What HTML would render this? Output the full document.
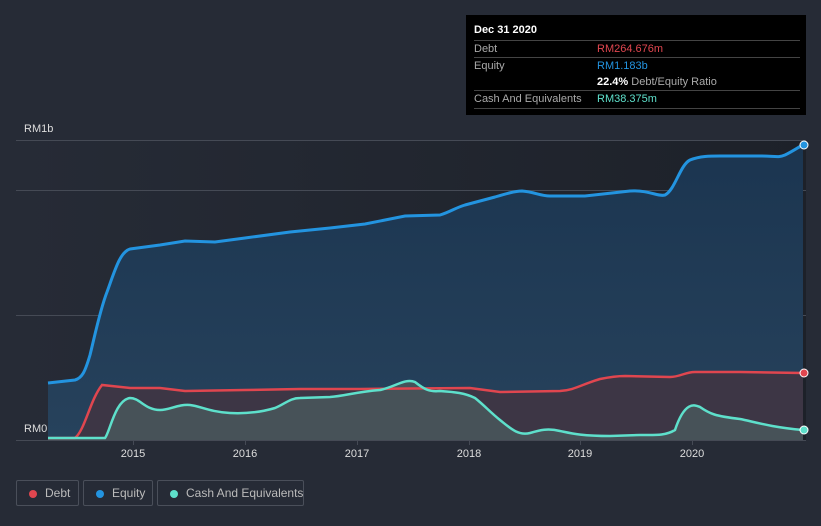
<!DOCTYPE html><html><head><style>
body{margin:0;width:821px;height:526px;background:#262b36;font-family:"Liberation Sans",sans-serif;overflow:hidden;position:relative}
.tt{position:absolute;left:466px;top:15px;width:340px;height:100px;background:#000;color:#fff;font-size:11px}
.r{position:absolute;left:8px;right:6px;border-top:1px solid #444;height:17px;line-height:17px;color:#aaa}
.r span{position:absolute;left:123px}
.leg{position:absolute;top:480px;height:26px;border:1px solid #4a4f5a;border-radius:2px;color:#bbb;font-size:12px;line-height:24px;box-sizing:border-box;white-space:nowrap}
.leg i{position:absolute;left:12px;top:9px;width:8px;height:8px;border-radius:50%}
</style></head><body>
<svg width="821" height="526" style="position:absolute;left:0;top:0">
<defs><linearGradient id="bg" x1="0" y1="0" x2="1" y2="0"><stop offset="0" stop-color="#262b36"/><stop offset="1" stop-color="#1d2129"/></linearGradient>
<linearGradient id="eq" x1="0" y1="0" x2="0" y2="1"><stop offset="0" stop-color="#1b3550"/><stop offset="1" stop-color="#27425c"/></linearGradient></defs>
<rect x="16" y="140" width="790" height="300" fill="url(#bg)"/>
<g stroke="#454a55" stroke-width="1"><line x1="16" y1="140.5" x2="806" y2="140.5"/><line x1="16" y1="190.5" x2="806" y2="190.5"/><line x1="16" y1="315.5" x2="806" y2="315.5"/><line x1="16" y1="440.5" x2="806" y2="440.5"/></g>
<path d="M48,383 L75,380 C82,378 85,372 90,355 C95,335 100,310 107,292 C115,270 120,252 130,249 L160,245 185,241 215,242 245,238 290,232 330,228 365,224 405,216 440,215 C450,212 455,208 465,205 L495,197 C505,194 515,191 522,191 C535,192 540,196 550,196 L585,196 630,191 C650,190 658,197 665,195 C675,190 680,165 690,160 C700,156 710,156 720,156 L760,156 C775,156 778,158 785,155 C793,151 797,148 803,145 L803,440 48,440Z" fill="url(#eq)"/>
<path d="M48,438 L75,438 C85,430 90,400 102,385 L130,388 160,388 185,391 245,390 300,389 360,389 470,388 500,392 560,391 C575,390 580,385 600,379 C610,377 620,376 625,376 L670,377 C680,377 685,372 695,372 L740,372 803,373 L803,440 48,440Z" fill="#3d3645"/>
<path d="M48,438 L105,438 C110,432 115,400 130,398 C140,398 145,410 160,410 C170,410 178,404 190,405 C200,406 210,412 230,413 C250,414 265,411 275,408 C285,404 290,398 300,398 L330,397 C345,396 355,392 380,390 C395,387 405,378 415,382 C425,390 430,392 440,391 C455,392 465,393 475,398 C485,406 490,412 500,420 C510,428 518,436 530,433 C540,430 548,428 560,431 C570,433 580,436 610,436 L640,435 C655,435 665,436 675,430 C685,400 695,405 700,407 C710,414 715,416 740,419 C755,422 770,427 803,430 L803,440 48,440Z" fill="#48555a" opacity="0.9"/>
<path d="M48,383 L75,380 C82,378 85,372 90,355 C95,335 100,310 107,292 C115,270 120,252 130,249 L160,245 185,241 215,242 245,238 290,232 330,228 365,224 405,216 440,215 C450,212 455,208 465,205 L495,197 C505,194 515,191 522,191 C535,192 540,196 550,196 L585,196 630,191 C650,190 658,197 665,195 C675,190 680,165 690,160 C700,156 710,156 720,156 L760,156 C775,156 778,158 785,155 C793,151 797,148 803,145" fill="none" stroke="#2394e0" stroke-width="3"/>
<path d="M48,438 L75,438 C85,430 90,400 102,385 L130,388 160,388 185,391 245,390 300,389 360,389 470,388 500,392 560,391 C575,390 580,385 600,379 C610,377 620,376 625,376 L670,377 C680,377 685,372 695,372 L740,372 803,373" fill="none" stroke="#e0464f" stroke-width="2.5"/>
<path d="M48,438 L105,438 C110,432 115,400 130,398 C140,398 145,410 160,410 C170,410 178,404 190,405 C200,406 210,412 230,413 C250,414 265,411 275,408 C285,404 290,398 300,398 L330,397 C345,396 355,392 380,390 C395,387 405,378 415,382 C425,390 430,392 440,391 C455,392 465,393 475,398 C485,406 490,412 500,420 C510,428 518,436 530,433 C540,430 548,428 560,431 C570,433 580,436 610,436 L640,435 C655,435 665,436 675,430 C685,400 695,405 700,407 C710,414 715,416 740,419 C755,422 770,427 803,430" fill="none" stroke="#5ee0cb" stroke-width="2.5"/>
<circle cx="804" cy="145" r="4" fill="#2394e0" stroke="#fff" stroke-width="1"/>
<circle cx="804" cy="373" r="4" fill="#e0464f" stroke="#fff" stroke-width="1"/>
<circle cx="804" cy="430" r="4" fill="#5ee0cb" stroke="#fff" stroke-width="1"/>
<g stroke="#454a55"><line x1="133.5" y1="440" x2="133.5" y2="445"/><line x1="245.5" y1="440" x2="245.5" y2="445"/><line x1="357.5" y1="440" x2="357.5" y2="445"/><line x1="469.5" y1="440" x2="469.5" y2="445"/><line x1="580.5" y1="440" x2="580.5" y2="445"/><line x1="692.5" y1="440" x2="692.5" y2="445"/></g>
<g fill="#ddd" font-size="11" font-family="Liberation Sans" text-anchor="middle"><text x="133" y="457">2015</text><text x="245" y="457">2016</text><text x="357" y="457">2017</text><text x="469" y="457">2018</text><text x="580" y="457">2019</text><text x="692" y="457">2020</text></g>
<g fill="#ddd" font-size="11" font-family="Liberation Sans"><text x="24" y="132">RM1b</text><text x="24" y="432">RM0</text></g>
</svg>
<div class="tt"><div style="position:absolute;left:8px;top:9px;font-weight:bold">Dec 31 2020</div>
<div class="r" style="top:25px">Debt<span style="color:#e0464f">RM264.676m</span></div>
<div class="r" style="top:42px">Equity<span style="color:#2394e0">RM1.183b</span></div>
<div class="r" style="top:59px;border-top:none"><span style="color:#aaa"><b style="color:#fff">22.4%</b> Debt/Equity Ratio</span></div>
<div class="r" style="top:75px;border-bottom:1px solid #444">Cash And Equivalents<span style="color:#5ee0cb">RM38.375m</span></div></div>
<div class="leg" style="left:16px;width:63px"><i style="background:#e0464f"></i><span style="position:absolute;left:28px">Debt</span></div>
<div class="leg" style="left:83px;width:70px"><i style="background:#2394e0"></i><span style="position:absolute;left:28px">Equity</span></div>
<div class="leg" style="left:157px;width:147px"><i style="background:#5ee0cb"></i><span style="position:absolute;left:28px">Cash And Equivalents</span></div>
</body></html>
